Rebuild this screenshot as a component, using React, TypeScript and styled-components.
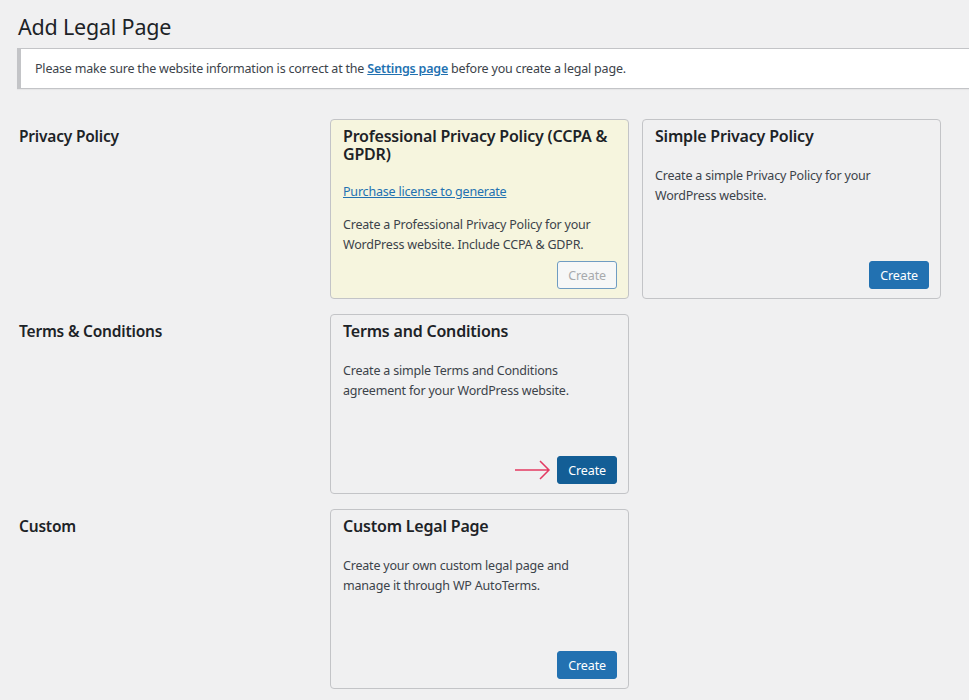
import React from "react";
import styled, { createGlobalStyle } from "styled-components";

const GlobalStyle = createGlobalStyle`
  html, body {
    margin: 0;
    background: #f0f0f1;
  }
  body {
    font-family: "Noto Sans", "Open Sans", sans-serif;
    font-size: 12.5px;
    letter-spacing: -0.2px;
    color: #3c434a;
    overflow: hidden;
  }
`;

const Wrap = styled.div`
  padding: 12px 0 0 17px;
`;

const Heading = styled.h1`
  margin: 0 0 0 1px;
  font-size: 21.5px;
  font-weight: 400;
  letter-spacing: -0.2px;
  line-height: 30px;
  color: #1d2327;
`;

const Notice = styled.div`
  margin: 6px -40px 30px 0;
  background: #fff;
  border: 1px solid #c3c4c7;
  border-left: 4px solid #c3c4c7;
  box-shadow: 0 1px 1px rgba(0, 0, 0, 0.04);
  padding: 10px 12px 10px 14px;
  line-height: 19px;
`;

const Link = styled.a<{ $strong?: boolean }>`
  color: #2271b1;
  text-decoration: underline;
  font-weight: ${(p) => (p.$strong ? 600 : 400)};
  cursor: pointer;
`;

const Section = styled.section`
  display: grid;
  grid-template-columns: 313px 1fr;
  margin-bottom: 15px;
`;

const Label = styled.h2`
  margin: 0;
  padding: 8px 0 0 2px;
  font-size: 15.5px;
  font-weight: 600;
  line-height: 18px;
  color: #1d2327;
`;

const Cards = styled.div`
  display: flex;
  flex-wrap: wrap;
  gap: 13px;
`;

const Card = styled.div<{ $pro?: boolean }>`
  box-sizing: border-box;
  width: 299px;
  min-height: 180px;
  display: flex;
  flex-direction: column;
  padding: 7px 11px 9px 12px;
  border: 1px solid #c3c4c7;
  border-radius: 4px;
  background: ${(p) => (p.$pro ? "#f6f5de" : "#f0f0f1")};
`;

const CardTitle = styled.h3`
  margin: 0;
  font-size: 16px;
  font-weight: 600;
  line-height: 18px;
  color: #1d2327;
`;

const Text = styled.p<{ $gap?: number }>`
  margin: ${(p) => p.$gap ?? 21}px 0 0;
  line-height: 20px;
`;

const Footer = styled.div`
  margin-top: auto;
  display: flex;
  justify-content: flex-end;
`;

const ButtonSlot = styled.div`
  position: relative;
`;

type Variant = "primary" | "pressed" | "disabled";

const Button = styled.button<{ $variant: Variant }>`
  height: 28px;
  padding: 0 10px;
  font-family: inherit;
  font-size: 12.5px;
  letter-spacing: -0.1px;
  border-radius: 3px;
  cursor: ${(p) => (p.$variant === "disabled" ? "default" : "pointer")};
  border: 1px solid
    ${(p) =>
      p.$variant === "disabled"
        ? "#6f9cc2"
        : p.$variant === "pressed"
        ? "#135e96"
        : "#2271b1"};
  background: ${(p) =>
    p.$variant === "disabled"
      ? "#f6f7f7"
      : p.$variant === "pressed"
      ? "#135e96"
      : "#2271b1"};
  color: ${(p) => (p.$variant === "disabled" ? "#a7aaad" : "#fff")};
`;

const Arrow = styled.svg`
  position: absolute;
  right: calc(100% + 6px);
  top: 50%;
  transform: translateY(-50%);
`;

const PointerArrow = () => (
  <Arrow width="37" height="22" viewBox="0 0 37 22" fill="none">
    <path d="M1 11H35M26 2l9 9-9 9" stroke="#e33a62" strokeWidth="1.5" />
  </Arrow>
);

type CardData = {
  title: string;
  text: string;
  pro?: boolean;
  variant: Variant;
  arrow?: boolean;
};

type SectionData = { label: string; cards: CardData[] };

const sections: SectionData[] = [
  {
    label: "Privacy Policy",
    cards: [
      {
        title: "Professional Privacy Policy (CCPA & GPDR)",
        text: "Create a Professional Privacy Policy for your WordPress website. Include CCPA & GDPR.",
        pro: true,
        variant: "disabled",
      },
      {
        title: "Simple Privacy Policy",
        text: "Create a simple Privacy Policy for your WordPress website.",
        variant: "primary",
      },
    ],
  },
  {
    label: "Terms & Conditions",
    cards: [
      {
        title: "Terms and Conditions",
        text: "Create a simple Terms and Conditions agreement for your WordPress website.",
        variant: "pressed",
        arrow: true,
      },
    ],
  },
  {
    label: "Custom",
    cards: [
      {
        title: "Custom Legal Page",
        text: "Create your own custom legal page and manage it through WP AutoTerms.",
        variant: "primary",
      },
    ],
  },
];

const App: React.FC = () => (
  <>
    <GlobalStyle />
    <Wrap>
      <Heading>Add Legal Page</Heading>
      <Notice>
        Please make sure the website information is correct at the{" "}
        <Link $strong>Settings page</Link> before you create a legal page.
      </Notice>
      {sections.map((s) => (
        <Section key={s.label}>
          <Label>{s.label}</Label>
          <Cards>
            {s.cards.map((c) => (
              <Card key={c.title} $pro={c.pro}>
                <CardTitle>{c.title}</CardTitle>
                {c.pro && (
                  <Text $gap={19}>
                    <Link>Purchase license to generate</Link>
                  </Text>
                )}
                <Text $gap={c.pro ? 13 : 21}>{c.text}</Text>
                <Footer>
                  <ButtonSlot>
                    {c.arrow && <PointerArrow />}
                    <Button $variant={c.variant} disabled={c.variant === "disabled"}>
                      Create
                    </Button>
                  </ButtonSlot>
                </Footer>
              </Card>
            ))}
          </Cards>
        </Section>
      ))}
    </Wrap>
  </>
);

export default App;
